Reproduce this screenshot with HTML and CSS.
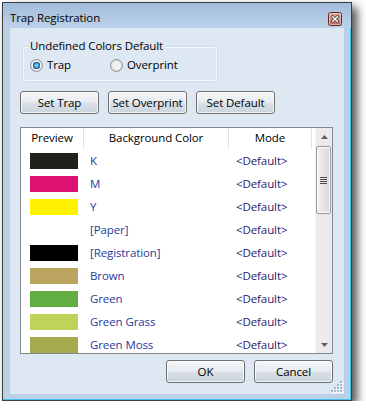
FILE: index.html
```html
<!DOCTYPE html>
<html lang="en">
<head>
    <meta charset="UTF-8">
    <title>Trap Registration</title>
    <link rel="stylesheet" href="styles.css">
</head>
<body>
<div class="window">
    <div class="titlebar">
        <span class="title">Trap Registration</span>
        <span class="close-btn">
            <svg width="14" height="14" viewBox="0 0 14 14">
                <defs>
                    <linearGradient id="cg" x1="0" y1="0" x2="0" y2="1">
                        <stop offset="0" stop-color="#eab3a8"/>
                        <stop offset="0.5" stop-color="#d88a7e"/>
                        <stop offset="1" stop-color="#c56457"/>
                    </linearGradient>
                </defs>
                <rect x="0.5" y="0.5" width="13" height="13" rx="2" fill="url(#cg)" stroke="#5c2a26"/>
                <rect x="1.5" y="1.5" width="11" height="11" rx="1" fill="none" stroke="#f3cfc8" stroke-opacity="0.7"/>
                <path d="M4.5 4.5 L9.5 9.5 M9.5 4.5 L4.5 9.5" stroke="#3d3d3d" stroke-width="3" stroke-linecap="square"/>
                <path d="M4.5 4.5 L9.5 9.5 M9.5 4.5 L4.5 9.5" stroke="#fff" stroke-width="1.4" stroke-linecap="square"/>
            </svg>
        </span>
    </div>
    <div class="client">
        <div class="group">
            <span class="group-title">Undefined Colors Default</span>
            <div class="radios">
                <label class="radio radio-first"><span class="radio-dot checked"></span>Trap</label>
                <label class="radio"><span class="radio-dot"></span>Overprint</label>
            </div>
        </div>

        <div class="btn-row">
            <button class="btn">Set Trap</button>
            <button class="btn">Set Overprint</button>
            <button class="btn">Set Default</button>
        </div>

        <div class="list">
            <div class="list-body">
                <div class="list-header">
                    <div class="col col-preview">Preview</div>
                    <div class="col col-name">Background Color</div>
                    <div class="col col-mode">Mode</div>
                </div>
                <div class="row"><span class="cell-preview"><span class="swatch sw-k"></span></span><span class="cell-name">K</span><span class="cell-mode">&lt;Default&gt;</span></div>
                <div class="row"><span class="cell-preview"><span class="swatch sw-m"></span></span><span class="cell-name">M</span><span class="cell-mode">&lt;Default&gt;</span></div>
                <div class="row"><span class="cell-preview"><span class="swatch sw-y"></span></span><span class="cell-name">Y</span><span class="cell-mode">&lt;Default&gt;</span></div>
                <div class="row"><span class="cell-preview"><span class="swatch sw-paper"></span></span><span class="cell-name">[Paper]</span><span class="cell-mode">&lt;Default&gt;</span></div>
                <div class="row"><span class="cell-preview"><span class="swatch sw-reg"></span></span><span class="cell-name">[Registration]</span><span class="cell-mode">&lt;Default&gt;</span></div>
                <div class="row"><span class="cell-preview"><span class="swatch sw-brown"></span></span><span class="cell-name">Brown</span><span class="cell-mode">&lt;Default&gt;</span></div>
                <div class="row"><span class="cell-preview"><span class="swatch sw-green"></span></span><span class="cell-name">Green</span><span class="cell-mode">&lt;Default&gt;</span></div>
                <div class="row"><span class="cell-preview"><span class="swatch sw-grass"></span></span><span class="cell-name">Green Grass</span><span class="cell-mode">&lt;Default&gt;</span></div>
                <div class="row"><span class="cell-preview"><span class="swatch sw-moss"></span></span><span class="cell-name">Green Moss</span><span class="cell-mode">&lt;Default&gt;</span></div>
            </div>
            <div class="scrollbar">
                <div class="sb-arrow"><svg width="7" height="4" viewBox="0 0 7 4"><path d="M3.5 0 L7 4 L0 4 Z" fill="#606060"/></svg></div>
                <div class="sb-track">
                    <div class="sb-thumb">
                        <svg width="7" height="7" viewBox="0 0 7 7"><path d="M0 0.5 H7 M0 2.5 H7 M0 4.5 H7 M0 6.5 H7" stroke="#4a4a4a" stroke-width="1"/></svg>
                    </div>
                </div>
                <div class="sb-arrow"><svg width="7" height="4" viewBox="0 0 7 4"><path d="M0 0 L7 0 L3.5 4 Z" fill="#606060"/></svg></div>
            </div>
        </div>

        <div class="footer">
            <button class="btn">OK</button>
            <button class="btn">Cancel</button>
        </div>

        <!-- grip de redimensionar -->
        <svg class="grip" width="13" height="13" viewBox="0 0 13 13">
            <g fill="#ffffff">
                <rect x="11" y="2" width="2" height="2"/>
                <rect x="8" y="5" width="2" height="2"/><rect x="11" y="5" width="2" height="2"/>
                <rect x="5" y="8" width="2" height="2"/><rect x="8" y="8" width="2" height="2"/><rect x="11" y="8" width="2" height="2"/>
                <rect x="2" y="11" width="2" height="2"/><rect x="5" y="11" width="2" height="2"/><rect x="8" y="11" width="2" height="2"/><rect x="11" y="11" width="2" height="2"/>
            </g>
            <g fill="#a9b8c8">
                <rect x="10" y="1" width="2" height="2"/>
                <rect x="7" y="4" width="2" height="2"/><rect x="10" y="4" width="2" height="2"/>
                <rect x="4" y="7" width="2" height="2"/><rect x="7" y="7" width="2" height="2"/><rect x="10" y="7" width="2" height="2"/>
                <rect x="1" y="10" width="2" height="2"/><rect x="4" y="10" width="2" height="2"/><rect x="7" y="10" width="2" height="2"/><rect x="10" y="10" width="2" height="2"/>
            </g>
        </svg>
    </div>
</div>
</body>
</html>
```

FILE: styles.css
```css
body {
    margin: 0;
    background: #fff;
    font-family: 'Open Sans', 'Liberation Sans', sans-serif;
    font-size: 11.5px;
    letter-spacing: -0.1px;
    color: #000;
}

/* Ventana principal */
.window {
    position: relative;
    margin: 2px 0 0 2px;
    width: 350px;
    height: 399px;
    box-sizing: border-box;
    border: 1px solid #3c3c3c;
    background: #bad0e9;
    box-shadow: 5px 5px 9px rgba(0, 0, 0, 0.7), inset -1px -1px 0 #3fc4ee;
    display: flex;
    flex-direction: column;
}

.titlebar {
    flex: none;
    height: 25px;
    box-sizing: border-box;
    padding: 7px 9px 0 7px;
    display: flex;
    align-items: flex-start;
    background: linear-gradient(#a2bcda, #bcd2ea);
}

    .titlebar .title {
        line-height: 16px;
        font-size: 11.5px;
    }

    .titlebar .close-btn {
        margin-left: auto;
        margin-top: 2px;
        width: 14px;
        height: 14px;
        display: flex;
    }

.client {
    position: relative;
    flex: 1;
    margin: 0 7px 6px 7px;
    padding: 0 11px 0 10px;
    background: #dde8f3;
    display: flex;
    flex-direction: column;
}

/* Grupo de opciones */
.group {
    margin: 18px 0 0 2px;
    width: 196px;
    height: 36px;
    box-sizing: border-box;
    border: 1px solid #d0dbe4;
    border-radius: 3px;
    box-shadow: inset 0 0 0 1px #f7fafc;
    padding: 0 5px;
}

.group-title {
    display: block;
    width: fit-content;
    margin-top: -8px;
    padding: 0 2px;
    line-height: 14px;
    background: #dde8f3;
}

.radios {
    display: flex;
    margin-top: 4px;
    line-height: 16px;
}

.radio {
    display: flex;
    align-items: center;
    gap: 4px;
}

    .radio-first {
        width: 80px;
        margin-left: 2px;
    }

.radio-dot {
    width: 13px;
    height: 13px;
    box-sizing: border-box;
    border: 1px solid #8f9496;
    border-radius: 50%;
    background: radial-gradient(circle at 50% 50%, #e8e8e8 0, #f6f6f6 3px, #d2d2d2 6px);
}

    .radio-dot.checked {
        background: radial-gradient(circle at 50% 50%, #a6e6ff 0, #3b9fd6 2px, #1c5f98 3.5px, #f4f4f4 4px, #d4d4d4 6px);
    }

/* Botones */
.btn-row {
    display: flex;
    gap: 9px;
    margin-top: 9px;
}

.btn {
    width: 79px;
    height: 23px;
    box-sizing: border-box;
    padding: 0;
    border: 1px solid #707070;
    border-radius: 3px;
    background: linear-gradient(#f3f5f7 0%, #e9edf1 48%, #d9e0e7 52%, #cbd3dc 100%);
    box-shadow: inset 0 0 0 1px rgba(255, 255, 255, 0.75);
    font-family: inherit;
    font-size: 11.5px;
    letter-spacing: -0.1px;
    line-height: 16px;
    color: #000;
}

/* Lista de colores */
.list {
    margin-top: 13px;
    height: 227px;
    box-sizing: border-box;
    border: 1px solid #828790;
    background: #fff;
    display: flex;
    overflow: hidden;
}

.list-body {
    width: 294px;
    overflow: hidden;
}

.list-header {
    display: flex;
    height: 21px;
    line-height: 19px;
    width: 291px;
}

    .list-header .col {
        box-sizing: border-box;
        text-align: center;
        border-right: 1px solid #e3e5e8;
    }

.col-preview {
    width: 63px;
}

.col-name {
    width: 145px;
}

.col-mode {
    width: 83px;
}

.row {
    display: flex;
    align-items: center;
    height: 23px;
    line-height: 16px;
}

.cell-preview {
    width: 63px;
    display: flex;
    padding-left: 9px;
    box-sizing: border-box;
}

.cell-name {
    width: 145px;
    padding-left: 6px;
    box-sizing: border-box;
    color: #1f3b9c;
}

.cell-mode {
    padding-left: 7px;
    color: #1e2170;
}

.swatch {
    width: 48px;
    height: 16px;
}

.sw-k { background: #20201c; }
.sw-m { background: #df1171; }
.sw-y { background: #fff100; }
.sw-paper { background: #fff; }
.sw-reg { background: #000; }
.sw-brown { background: #bba560; }
.sw-green { background: #63ae43; }
.sw-grass { background: #bdd35a; }
.sw-moss { background: #a7ab50; }

/* Barra de desplazamiento */
.scrollbar {
    width: 17px;
    display: flex;
    flex-direction: column;
    background: #ebebeb;
    border-left: 1px solid #f2f2f2;
    box-sizing: border-box;
}

.sb-arrow {
    height: 17px;
    display: flex;
    align-items: center;
    justify-content: center;
}

.sb-track {
    flex: 1;
    padding-top: 1px;
}

.sb-thumb {
    height: 68px;
    margin: 0 1px 0 0;
    box-sizing: border-box;
    border: 1px solid #9b9b9b;
    border-radius: 2px;
    background: linear-gradient(to right, #f2f2f2, #e6e6e6 50%, #d8d8d8);
    box-shadow: inset 0 0 0 1px #fbfbfb;
    display: flex;
    align-items: center;
    justify-content: center;
}

.footer {
    display: flex;
    justify-content: flex-end;
    gap: 9px;
    margin-top: 6px;
}

.grip {
    position: absolute;
    right: 1px;
    bottom: 1px;
}
```
